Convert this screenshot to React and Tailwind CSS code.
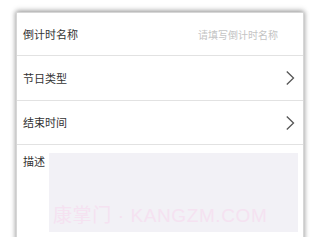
import React from "react";

function Chevron() {
  return (
    <svg width="10" height="16" viewBox="0 0 10 16" fill="none">
      <path d="M1.8 1.5 L8.5 8 L1.8 14.5" stroke="#555" strokeWidth="1.3" />
    </svg>
  );
}

export default function App() {
  return (
    <div
      className="w-[316px] h-[237px] bg-white overflow-hidden pt-[12px] pl-[16px] pr-[12px]"
      style={{ fontFamily: '"Noto Sans CJK SC", "Noto Sans", sans-serif' }}
    >
      <div className="bg-white h-[240px] border-x border-t border-[#d6d6d6] shadow-[0_-2px_5px_rgba(0,0,0,0.25),-2px_0_4px_rgba(0,0,0,0.12),2px_0_4px_rgba(0,0,0,0.12)] flex flex-col">
        <div className="h-[43px] flex items-center justify-between pl-[6px] pr-[25px] border-b border-[#e2e2e2]">
          <span className="text-[11px] text-[#333]">倒计时名称</span>
          <span className="text-[10px] text-[#c4c4c4]">请填写倒计时名称</span>
        </div>
        <div className="h-[45px] flex items-center justify-between pl-[6px] pr-[8px] border-b border-[#e2e2e2]">
          <span className="text-[11px] text-[#333]">节日类型</span>
          <Chevron />
        </div>
        <div className="h-[44px] flex items-center justify-between pl-[6px] pr-[8px] border-b border-[#e2e2e2]">
          <span className="text-[11px] text-[#333]">结束时间</span>
          <Chevron />
        </div>
        <div className="flex pl-[6px] pr-[5px] pt-[8px] gap-[4px]">
          <span className="text-[11px] text-[#333] leading-[16px] whitespace-nowrap">描述</span>
          <div className="flex-1 h-[79px] bg-[#f2f1f6] flex items-end pl-[4px] pb-[2px]">
            <span className="text-[19px] tracking-[0.6px] text-[#f5e2f1] whitespace-nowrap" style={{ fontFamily: '"Liberation Sans", "Noto Sans CJK SC", sans-serif' }}>康掌门 · KANGZM.COM</span>
          </div>
        </div>
      </div>
    </div>
  );
}
